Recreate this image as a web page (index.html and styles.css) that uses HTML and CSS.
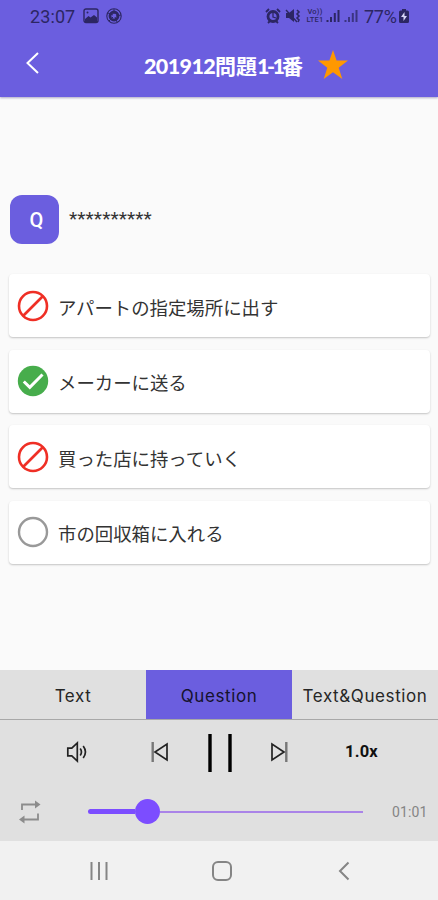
FILE: index.html
```html
<!DOCTYPE html>
<html lang="ja">
<head>
<meta charset="utf-8">
<title>201912問題1-1番</title>
<link rel="stylesheet" href="styles.css">
</head>
<body>
<header class="header">
  <div class="status">
    <span class="clock">23:07</span>
    <svg class="picture" width="16" height="16" viewBox="0 0 16 16"><rect x="1" y="1" width="14" height="13.5" rx="2" fill="none" stroke="currentColor" stroke-width="1.4"/><path d="M2 11 5.500 8l2 1.500L11 7l3 2.500v4.500H2z" fill="currentColor"/><circle cx="4.500" cy="4.500" r="1" fill="currentColor"/></svg>
    <svg class="shutter" width="16" height="16" viewBox="0 0 16 16" fill="none" stroke="currentColor"><circle cx="8" cy="8" r="7.200" stroke-width="1.100"/><circle cx="8" cy="8" r="4" stroke-width="2.800"/><path d="M8 1v5M15 7l-5 1M11 14l-2-5M3 13l4-4M2 5l5 2" stroke-width="1"/></svg>
    <span class="spacer"></span>
    <svg class="alarm" width="16" height="16" viewBox="0 0 16 16" fill="none" stroke="currentColor"><circle cx="8" cy="8.500" r="5" stroke-width="2.800"/><path d="m1 4 3-3m8 0 3 3M3 15l2-2m6 0 2 2" stroke-width="1.800"/><path d="M8 5v4l3 1" stroke-width="1.300"/></svg>
    <svg class="mute" width="17" height="16" viewBox="0 0 17 16"><path d="M1 5h3l5-4v13l-5-4H1z" fill="currentColor"/><path d="m1 2 11 12" fill="none" stroke="currentColor" stroke-width="1.400"/><path d="m12 2 2 2-2 2 2 2-2 2 2 2-1 2" fill="none" stroke="currentColor" stroke-width="1.600"/></svg>
    <span class="volte"><span>Vo))</span><span>LTE1</span></span>
    <svg class="signal" width="14" height="14" viewBox="0 0 14 14"><path d="M.5 11h2v2h-2zM4 8h2v5H4zM7.800 4h2v9h-2zM11.500 1h2v12h-2z" fill="currentColor"/></svg>
    <svg class="signal second" width="14" height="14" viewBox="0 0 14 14"><path d="M.5 11h2v2h-2zM4 8h2v5H4zM7.800 4h2v9h-2zM11.500 1h2v12h-2z" fill="currentColor"/></svg>
    <span class="percent">77%</span>
    <svg class="battery" width="10" height="14" viewBox="0 0 10 14"><path d="M3 0h4v1.500h1.500Q10 1.500 10 3v9.500Q10 14 8.500 14h-7Q0 14 0 12.500V3Q0 1.500 1.500 1.500H3z" fill="currentColor"/><path d="M5.500 3 2 8h2.500v4L8 7H5.500z" fill="#d8d5f6"/></svg>
  </div>
  <div class="bar">
    <svg class="back" width="16" height="22" viewBox="0 0 16 22"><path d="M13 1 2.500 11 13 21" fill="none" stroke="#fff" stroke-width="2"/></svg>
    <h1 class="title"><span class="year">201912</span><span>問題</span><span class="number">1-1</span><span>番</span></h1>
    <svg class="star" width="30" height="29" viewBox="0 0 30 29"><path d="m15 0 3.600 10.600H30l-9.300 7.100L24.300 29 15 22.200 5.700 29l3.600-11.300L0 10.600h11.400z" fill="#ff9800"/></svg>
  </div>
</header>
<main class="content">
  <div class="question"><span class="badge">Q</span><span class="prompt">**********</span></div>
  <ul class="answers">
    <li class="answer"><svg width="32" height="32" viewBox="0 0 32 32" fill="none" stroke="#ef2f25" stroke-width="2.600"><circle cx="16" cy="16" r="14"/><path d="m6 26 20-20"/></svg><span>アパートの指定場所に出す</span></li>
    <li class="answer"><svg width="32" height="32" viewBox="0 0 32 32"><circle cx="16" cy="16" r="15.200" fill="#47ad4c"/><path d="m6.800 16.500 6 5.800L25.500 9.500" fill="none" stroke="#fff" stroke-width="3"/></svg><span>メーカーに送る</span></li>
    <li class="answer"><svg width="32" height="32" viewBox="0 0 32 32" fill="none" stroke="#ef2f25" stroke-width="2.600"><circle cx="16" cy="16" r="14"/><path d="m6 26 20-20"/></svg><span>買った店に持っていく</span></li>
    <li class="answer"><svg width="32" height="32" viewBox="0 0 32 32"><circle cx="16" cy="16" r="14" fill="none" stroke="#999" stroke-width="2.400"/></svg><span>市の回収箱に入れる</span></li>
  </ul>
</main>
<section class="player">
  <nav class="tabs"><span class="tab">Text</span><span class="tab active">Question</span><span class="tab wide">Text&amp;Question</span></nav>
  <div class="controls">
    <svg class="volume" width="23" height="22" viewBox="0 0 23 22" fill="none" stroke="#222" stroke-width="1.700"><path d="M1.800 7.200h4L11.300 2v18l-5.500-5.200h-4z"/><path d="M14.200 7.500q2.500 3.500 0 7M17.200 5q4.500 6 0 12"/></svg>
    <svg class="previous" width="18" height="20" viewBox="0 0 18 20" fill="none"><path d="M1.700 0v20" stroke="#777" stroke-width="2.400"/><path d="M16 2v16L4 10z" stroke="#222" stroke-width="1.700"/></svg>
    <svg class="pause" width="24" height="38" viewBox="0 0 24 38"><path d="M2 0v38M22 0v38" stroke="#000" stroke-width="3.400"/></svg>
    <svg class="next" width="18" height="20" viewBox="0 0 18 20" fill="none"><path d="M16.300 0v20" stroke="#777" stroke-width="2.400"/><path d="M2 2v16l12-8z" stroke="#222" stroke-width="1.700"/></svg>
    <span class="speed">1.0x</span>
  </div>
  <div class="progress">
    <svg class="repeat" width="22" height="24" viewBox="0 0 22 24"><path d="M3 10V4.500h14M19 13.500v6H4" fill="none" stroke="#8c8c8c" stroke-width="1.800"/><path d="m16 .5 5.500 4-5.500 4zM5.500 15.500 0 19.500l5.500 4z" fill="#8c8c8c"/></svg>
    <div class="slider"><span class="played"></span><span class="thumb"></span><span class="remaining"></span></div>
    <span class="duration">01:01</span>
  </div>
</section>
<footer class="system">
  <svg width="20" height="20" viewBox="0 0 20 20"><path d="M2.500 1v18M10 1v18M17.500 1v18" stroke="#858585" stroke-width="2"/></svg>
  <svg width="20" height="20" viewBox="0 0 20 20"><rect x="1" y="1" width="18" height="18" rx="5" fill="none" stroke="#858585" stroke-width="2"/></svg>
  <svg width="20" height="20" viewBox="0 0 20 20"><path d="M14.500 1.500 6 10l8.500 8.500" fill="none" stroke="#858585" stroke-width="2"/></svg>
</footer>
</body>
</html>
```
FILE: styles.css
```css
* { box-sizing: border-box; }
body {
  margin: 0;
  width: 438px;
  height: 900px;
  display: flex;
  flex-direction: column;
  overflow: hidden;
  background: #fafafa;
  color: #333;
  font-family: Roboto, "Noto Sans CJK JP", sans-serif;
}
svg { display: block; flex: none; }

.header {
  height: 97px;
  background: #6b5edf;
  box-shadow: 0 1px 2px rgba(60, 50, 120, .4);
}
.status {
  height: 32px;
  padding: 0 29px 0 30px;
  display: flex;
  align-items: center;
  color: #2c2663;
}
.clock { width: 46px; font-size: 18px; letter-spacing: .1px; }
.picture { margin-left: 7px; }
.shutter { margin-left: 7px; }
.spacer { flex: 1; }
.alarm { margin-right: -1px; }
.mute { margin-left: 5px; }
.volte {
  width: 20px;
  margin-left: 3px;
  display: grid;
  grid-template-rows: 8px 8px;
  font-size: 7.5px;
  line-height: 8px;
  font-weight: 500;
  letter-spacing: .2px;
  text-align: center;
}
.signal { margin-left: 1px; }
.second { margin-left: 4px; opacity: .75; }
.percent { width: 34px; margin-left: 6px; font-size: 18px; letter-spacing: -.3px; }
.battery { margin-left: 1px; }

.bar {
  height: 65px;
  padding-left: 25px;
  display: flex;
  align-items: center;
}
.back { margin-bottom: 3px; }
.title {
  width: 160px;
  margin: 2px 0 0 103px;
  display: flex;
  align-items: baseline;
  color: #fff;
  font: 700 21px/30px "Noto Sans CJK JP", sans-serif;
  white-space: nowrap;
}
.year, .number { font-family: Lato, sans-serif; font-weight: 900; font-size: 21.5px; }
.year { width: 71px; letter-spacing: -.6px; }
.number { width: 25px; letter-spacing: -2.5px; }
.star { margin-left: 14px; }

.content { flex: 1; padding: 98px 8px 0 9px; }
.question { height: 49px; display: flex; align-items: center; }
.badge {
  width: 49px;
  height: 49px;
  padding-left: 4px;
  margin-left: 1px;
  border-radius: 12px;
  display: grid;
  place-items: center;
  background: #6b5edf;
  color: #fff;
  font-size: 20px;
  font-weight: 500;
}
.prompt { margin: -2px 0 0 10px; font-size: 19px; letter-spacing: .1px; }
.answers {
  margin: 30px 0 0;
  padding: 0;
  display: grid;
  gap: 12.5px;
  list-style: none;
}
.answer {
  height: 63px;
  padding-left: 8px;
  display: flex;
  align-items: center;
  gap: 9px;
  border-radius: 4px;
  background: #fff;
  box-shadow: 0 1px 2px rgba(0, 0, 0, .22);
  font: 400 18.4px/30px "Noto Sans CJK JP", sans-serif;
}
.answer span { margin-top: 2px; }

.player { height: 171px; background: #e0e0e0; }
.tabs {
  height: 50px;
  display: grid;
  grid-template-columns: repeat(3, 1fr);
  border-bottom: 1.5px solid #a8a8a8;
}
.tab {
  display: grid;
  place-items: center;
  white-space: nowrap;
  color: #262626;
  font: 400 17px/24px Inter, sans-serif;
  letter-spacing: .6px;
  padding-top: 3px;
}
.active { background: #6b5edf; color: #15122d; }
.controls { height: 63px; display: flex; align-items: center; }
.volume { margin-left: 66px; }
.previous { margin-left: 62px; }
.pause { margin-left: 39px; margin-top: 2px; }
.next { margin-left: 38px; }
.speed { margin-left: 57px; color: #111; font-size: 16.5px; font-weight: 700; letter-spacing: .2px; }
.progress { height: 57px; display: flex; align-items: center; }
.repeat { margin-left: 19px; }
.slider { width: 275px; margin-left: 47px; display: flex; align-items: center; }
.played { width: 47px; height: 5px; border-radius: 3px 0 0 3px; background: #7c4dff; }
.thumb { width: 25px; height: 25px; border-radius: 50%; background: #7c4dff; }
.remaining { flex: 1; height: 2px; background: #aa84e8; }
.duration { margin-left: 29px; color: #858585; font-size: 14px; letter-spacing: .1px; }
.system {
  height: 59px;
  padding: 1px 84px 0 89px;
  display: flex;
  align-items: center;
  justify-content: space-between;
  background: #f1f1f1;
}
```
